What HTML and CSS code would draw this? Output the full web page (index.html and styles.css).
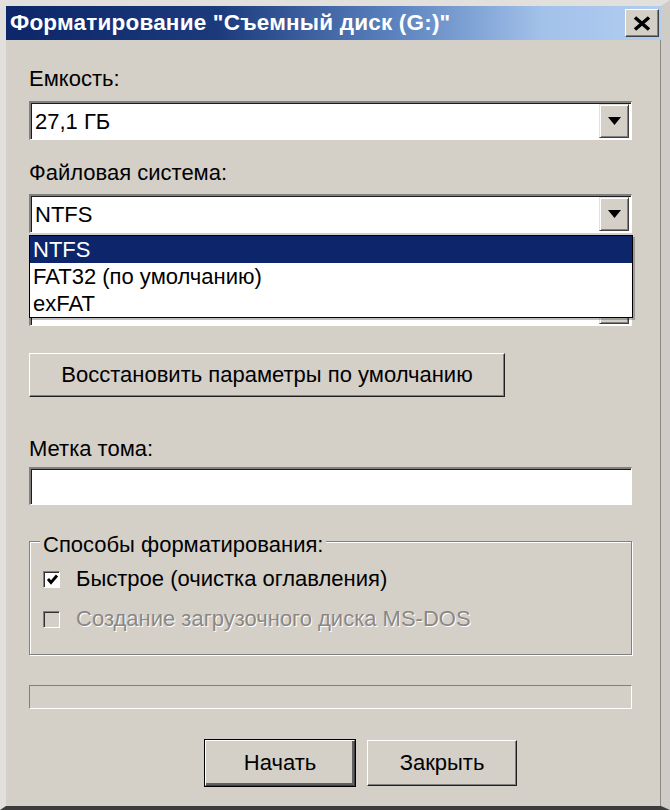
FILE: index.html
```html
<!DOCTYPE html>
<html lang="ru">
<head>
<meta charset="utf-8">
<title>Форматирование</title>
<link rel="stylesheet" href="styles.css">
</head>
<body>
<div class="window">
  <div class="titlebar">
    <span class="title">Форматирование "Съемный диск (G:)"</span>
    <div class="close">
      <svg width="18" height="15" viewBox="0 0 18 15"><path d="M2 1.5 L16 13.5 M16 1.5 L2 13.5" stroke="#000" stroke-width="3.6" fill="none"/></svg>
    </div>
  </div>
  <div class="content">
    <div class="lbl lbl-first">Емкость:</div>
    <div class="combo">
      <span class="combo-text">27,1 ГБ</span>
      <span class="combo-btn"><svg width="13" height="8" viewBox="0 0 13 8"><path d="M0 0 H13 L6.5 8 Z" fill="#000"/></svg></span>
    </div>

    <div class="lbl lbl-next">Файловая система:</div>
    <div class="combo-wrap">
      <div class="combo">
        <span class="combo-text">NTFS</span>
        <span class="combo-btn"><svg width="13" height="8" viewBox="0 0 13 8"><path d="M0 0 H13 L6.5 8 Z" fill="#000"/></svg></span>
      </div>
      <ul class="popup">
        <li class="sel">NTFS</li>
        <li>FAT32 (по умолчанию)</li>
        <li>exFAT</li>
      </ul>
    </div>

    <div class="lbl lbl-next"></div>
    <div class="combo">
      <span class="combo-text"></span>
      <span class="combo-btn"><svg width="13" height="8" viewBox="0 0 13 8"><path d="M0 0 H13 L6.5 8 Z" fill="#000"/></svg></span>
    </div>

    <div class="btn btn-restore">Восстановить параметры по умолчанию</div>

    <div class="lbl lbl-volume">Метка тома:</div>
    <div class="textfield"></div>

    <fieldset class="group">
      <legend>Способы форматирования:</legend>
      <div class="check-row">
        <span class="checkbox">
          <svg width="13" height="13" viewBox="0 0 13 13"><path d="M2 6 L5 9.5 L11 2.5" stroke="#000" stroke-width="2.8" fill="none"/></svg>
        </span>
        <span class="check-text">Быстрое (очистка оглавления)</span>
      </div>
      <div class="check-row row-second">
        <span class="checkbox disabled"></span>
        <span class="check-text disabled-text">Создание загрузочного диска MS-DOS</span>
      </div>
    </fieldset>

    <div class="progress"></div>

    <div class="actions">
      <div class="btn btn-action btn-default">Начать</div>
      <div class="btn btn-action">Закрыть</div>
    </div>
  </div>
</div>
</body>
</html>
```
FILE: styles.css
```css
* { box-sizing: border-box; }
html, body { margin: 0; padding: 0; }
body {
  width: 670px;
  height: 810px;
  overflow: hidden;
  background: #d4d0c8;
  font-family: "Liberation Sans", Arial, sans-serif;
  font-size: 22px;
  color: #000;
}
.window {
  width: 670px;
  height: 810px;
  background: #d4d0c8;
  border-top: 6px solid #e2e0dc;
  border-left: 6px solid #e2e0dc;
  border-right: 9px solid #cfcbc6;
  border-bottom: 4px solid #3c3c3c;
  box-shadow: inset -1px 0 0 #8a8784;
}
.titlebar {
  height: 34px;
  display: flex;
  align-items: center;
  justify-content: space-between;
  padding-left: 4px;
  padding-right: 2px;
  background: linear-gradient(to right, #0c2669 0%, #1b3a7c 32%, #5d84c0 60%, #a3c2ea 82%, #b1cdf0 100%);
}
.title {
  color: #fff;
  font-weight: bold;
  font-size: 22.5px;
  letter-spacing: 0.2px;
  white-space: nowrap;
}
.close {
  width: 34px;
  height: 28px;
  background: #d4d0c8;
  border: 1px solid;
  border-color: #fff #404040 #404040 #fff;
  box-shadow: inset -1px -1px 0 #808080;
  display: flex;
  align-items: center;
  justify-content: center;
}
.content {
  padding: 0 29px 0 23px;
}
.lbl {
  line-height: 24px;
  height: 24px;
  white-space: nowrap;
}
.lbl-first { margin-top: 27px; }
.lbl-next { margin-top: 21px; }
.lbl-volume { margin-top: 40px; }
.lbl + .combo, .lbl + .combo-wrap { margin-top: 9px; }
.lbl-first + .combo { margin-top: 10px; }

.combo-wrap { position: relative; }
.combo {
  height: 39px;
  display: flex;
  align-items: stretch;
  background: #fff;
  border-style: solid;
  border-width: 2px 1px 1px 2px;
  border-color: #808080 #fff #fff #808080;
  box-shadow: inset 1px 1px 0 #1c1c1c;
}
.combo-text {
  flex: 1;
  display: flex;
  align-items: center;
  padding-left: 4px;
  padding-top: 1px;
  white-space: nowrap;
}
.combo-btn {
  width: 30px;
  margin: 1px 2px 1px 0;
  background: #d4d0c8;
  border: 1px solid;
  border-color: #e4e2de #404040 #404040 #e4e2de;
  box-shadow: inset 1px 1px 0 #fff, inset -1px -1px 0 #808080;
  display: flex;
  align-items: center;
  justify-content: center;
}
.popup {
  position: absolute;
  left: 0;
  top: 41px;
  width: 604px;
  margin: 0;
  padding: 0;
  list-style: none;
  background: #fff;
  border: 1px solid #000;
  box-shadow: 2px 2px 0 rgba(0,0,0,0.25);
  z-index: 2;
}
.popup li {
  height: 27px;
  line-height: 27px;
  padding-left: 3px;
  white-space: nowrap;
}
.popup li.sel {
  background: #0c256b;
  color: #fff;
}

.btn {
  background: #d4d0c8;
  border: 1px solid;
  border-color: #fff #202020 #202020 #fff;
  box-shadow: inset -1px -1px 0 #808080;
  display: flex;
  align-items: center;
  justify-content: center;
  white-space: nowrap;
}
.btn-restore {
  margin-top: 27px;
  width: 476px;
  height: 44px;
}
.textfield {
  margin-top: 6px;
  height: 38px;
  background: #fff;
  border-style: solid;
  border-width: 2px 1px 1px 2px;
  border-color: #808080 #fff #fff #808080;
  box-shadow: inset 1px 1px 0 #1c1c1c;
}

.group {
  margin: 20px 0 0 0;
  padding: 7px 0 20px 0;
  border: 1px solid #808080;
  box-shadow: inset 1px 1px 0 #fff, 1px 1px 0 #fff;
  min-width: 0;
}
.group legend {
  margin-left: 10px;
  padding: 8px 3px 0 3px;
  line-height: 24px;
  background: #d4d0c8;
}
.check-row {
  height: 30px;
  display: flex;
  align-items: center;
  gap: 16px;
  padding-left: 13px;
  white-space: nowrap;
}
.row-second { margin-top: 10px; }
.checkbox {
  width: 17px;
  height: 17px;
  flex: none;
  background: #fff;
  border-style: solid;
  border-width: 1px;
  border-color: #808080 #fff #fff #808080;
  box-shadow: inset 1px 1px 0 #303030;
  display: flex;
  align-items: center;
  justify-content: center;
  padding: 1px 0 0 1px;
}
.checkbox.disabled { background: #d4d0c8; }
.disabled-text {
  color: #8a8784;
  text-shadow: 1px 1px 0 #fff;
}

.progress {
  margin-top: 30px;
  height: 24px;
  border: 1px solid;
  border-color: #808080 #fff #fff #808080;
}

.actions {
  margin-top: 31px;
  display: flex;
  gap: 12px;
  padding-left: 176px;
}
.btn-action {
  width: 150px;
  height: 46px;
}
.btn-default {
  border-color: #fff #404040 #404040 #fff;
  box-shadow: inset -2px -2px 0 #606060, 0 0 0 1px #000;
}
```
